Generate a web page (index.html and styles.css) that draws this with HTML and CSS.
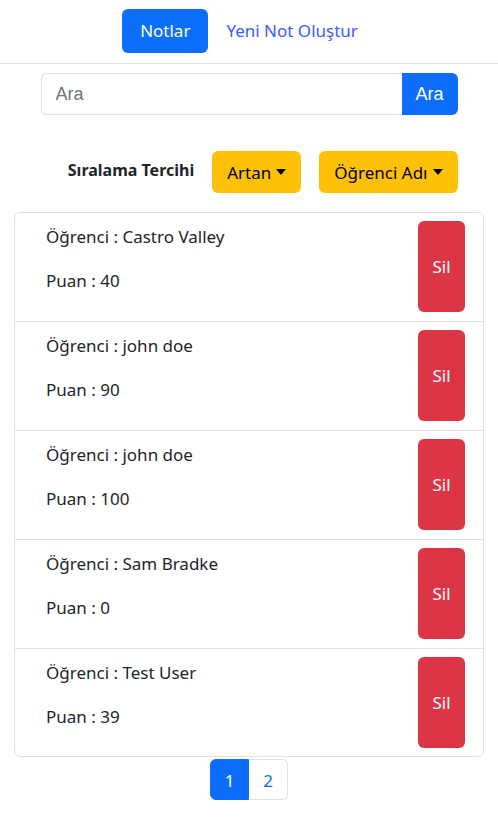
FILE: index.html
```html
<!DOCTYPE html>
<html lang="tr">
<head>
<meta charset="utf-8">
<title>Notlar</title>
<link rel="stylesheet" href="styles.css">
</head>
<body>
<nav class="topnav">
  <a class="nav-pill active" href="#">Notlar</a>
  <a class="nav-pill" href="#">Yeni Not Oluştur</a>
</nav>
<form class="search">
  <input class="search-input" type="text" placeholder="Ara">
  <button class="search-btn" type="button">Ara</button>
</form>
<div class="sort-row">
  <span class="sort-label">Sıralama Tercihi</span>
  <button class="btn-warn" type="button">Artan<span class="caret"></span></button>
  <button class="btn-warn" type="button">Öğrenci Adı<span class="caret"></span></button>
</div>
<ul class="list">
  <li class="item"><div class="info"><p>Öğrenci : Castro Valley</p><p>Puan : 40</p></div><button class="del" type="button">Sil</button></li>
  <li class="item"><div class="info"><p>Öğrenci : john doe</p><p>Puan : 90</p></div><button class="del" type="button">Sil</button></li>
  <li class="item"><div class="info"><p>Öğrenci : john doe</p><p>Puan : 100</p></div><button class="del" type="button">Sil</button></li>
  <li class="item"><div class="info"><p>Öğrenci : Sam Bradke</p><p>Puan : 0</p></div><button class="del" type="button">Sil</button></li>
  <li class="item"><div class="info"><p>Öğrenci : Test User</p><p>Puan : 39</p></div><button class="del" type="button">Sil</button></li>
</ul>
<div class="pager">
  <a class="page active" href="#">1</a>
  <a class="page" href="#">2</a>
</div>
</body>
</html>
```
FILE: styles.css
```css
* { box-sizing: border-box; }
body {
  margin: 0;
  font-family: "Noto Sans", "Open Sans", sans-serif;
  font-size: 16px;
  color: #212529;
  background: #fff;
}
.topnav {
  display: flex;
  justify-content: center;
  align-items: center;
  height: 64px;
  padding-bottom: 1px;
  border-bottom: 1px solid #dee2e6;
}
.nav-pill {
  display: block;
  height: 44px;
  line-height: 44px;
  padding: 0 18px;
  font-size: 17px;
  color: #3d5afe;
  text-decoration: none;
  border-radius: 6px;
}
.nav-pill.active {
  background: #0d6efd;
  color: #fff;
}
.search {
  display: flex;
  width: 417px;
  margin: 9px auto 0;
  height: 42px;
}
.search-input {
  flex: 1;
  min-width: 0;
  border: 1px solid #dee2e6;
  border-right: none;
  border-radius: 6px 0 0 6px;
  padding: 0 14px;
  font-family: "Liberation Sans", Arial, sans-serif;
  font-size: 18px;
  color: #212529;
  outline: none;
}
.search-input::placeholder { color: #6c757d; }
.search-btn {
  width: 56px;
  border: none;
  background: #0d6efd;
  color: #fff;
  border-radius: 0 6px 6px 0;
  font-family: "Liberation Sans", Arial, sans-serif;
  font-size: 18px;
  padding: 0;
}
.sort-row {
  display: flex;
  justify-content: flex-end;
  align-items: center;
  width: 417px;
  margin: 36px auto 0;
  gap: 18px;
}
.sort-label {
  font-weight: 700;
  font-size: 16px;
  padding-bottom: 4px;
}
.btn-warn {
  display: flex;
  align-items: center;
  height: 42px;
  padding: 0 15px;
  border: none;
  border-radius: 6px;
  background: #ffc107;
  color: #000;
  font-family: inherit;
  font-size: 17px;
}
.caret {
  display: inline-block;
  margin-left: 5px;
  width: 0;
  height: 0;
  border-left: 5px solid transparent;
  border-right: 5px solid transparent;
  border-top: 6px solid #000;
}
.list {
  list-style: none;
  margin: 19px 14px 0;
  padding: 0;
  border: 1px solid #dee2e6;
  border-radius: 6px;
}
.item {
  display: flex;
  justify-content: space-between;
  align-items: stretch;
  height: 109px;
  padding: 8px 18px 9px 31px;
  border-top: 1px solid #dee2e6;
}
.item:first-child { border-top: none; height: 108px; }
.item:last-child { height: 108px; padding-bottom: 8px; }
.info { padding-top: 3px; }
.info p {
  margin: 0 0 19px;
  font-size: 17px;
  line-height: 25px;
}
.del {
  width: 47px;
  border: none;
  border-radius: 6px;
  background: #dc3545;
  color: #fff;
  font-family: inherit;
  font-size: 17px;
  padding: 0;
}
.pager {
  display: flex;
  justify-content: center;
  margin-top: 2px;
}
.page {
  display: block;
  width: 39px;
  height: 41px;
  line-height: 41px;
  text-align: center;
  color: #0d6efd;
  text-decoration: none;
  border: 1px solid #dee2e6;
  font-size: 17px;
}
.page.active {
  background: #0d6efd;
  border-color: #0d6efd;
  color: #fff;
  border-radius: 6px 0 0 6px;
}
.page:last-child { border-radius: 0 6px 6px 0; border-left: none; }
```
